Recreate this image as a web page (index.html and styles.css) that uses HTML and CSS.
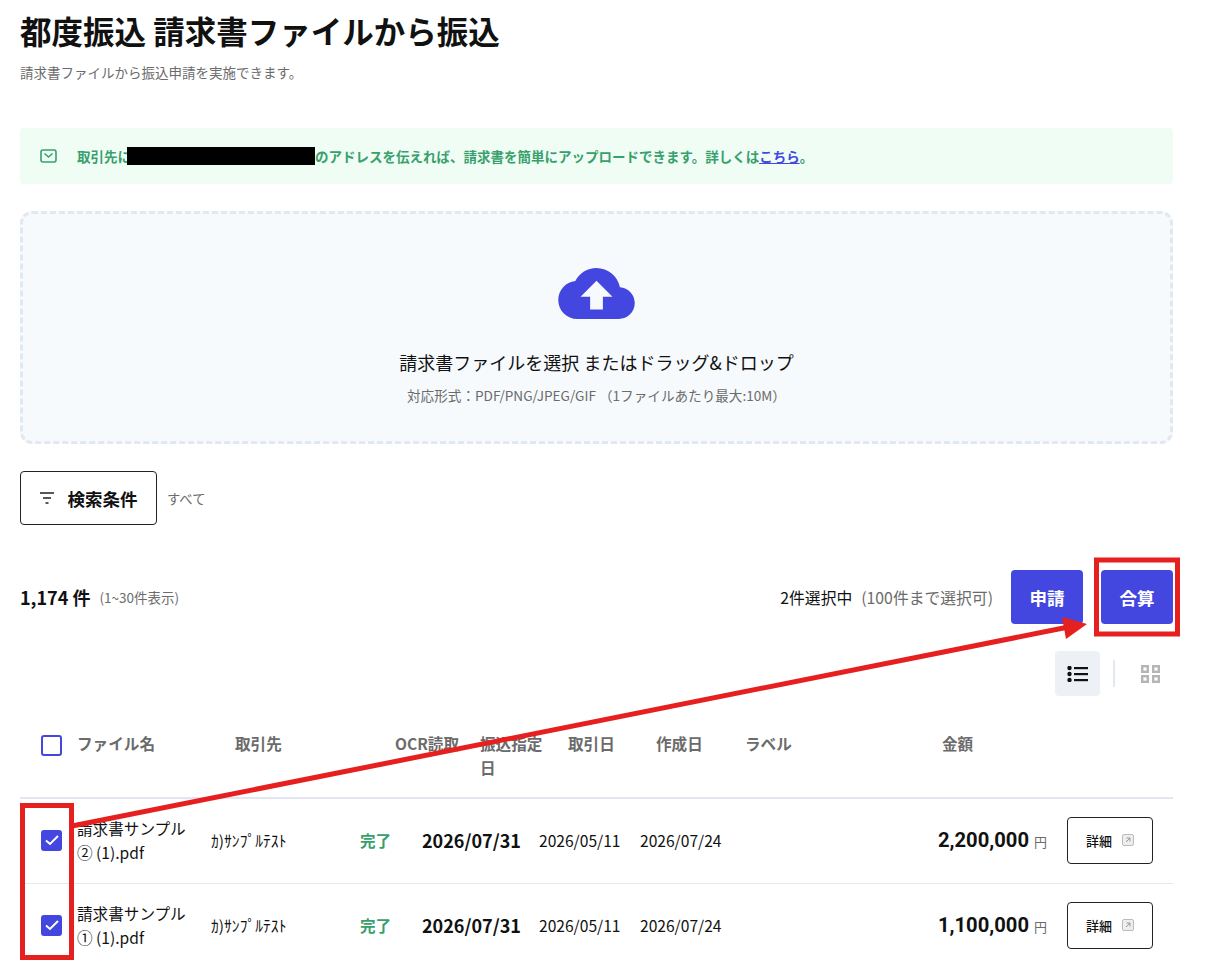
FILE: index.html
```html
<!DOCTYPE html>
<html lang="ja">
<head>
    <meta charset="UTF-8">
    <title>都度振込 請求書ファイルから振込</title>
    <link rel="stylesheet" href="styles.css">
</head>
<body>
    <main class="page">
        <h1 class="title">都度振込 請求書ファイルから振込</h1>
        <p class="subtitle">請求書ファイルから振込申請を実施できます。</p>

        <div class="notice">
            <svg class="notice-icon" viewBox="0 0 17 14" width="17" height="14"><rect x="1" y="1" width="15" height="12" rx="2" fill="none" stroke="#38a06c" stroke-width="1.6"/><path d="M4.5 4.5 L8.5 8 L12.5 4.5" fill="none" stroke="#38a06c" stroke-width="1.6"/></svg>
            <span>取引先に</span><span class="redacted"></span><span>のアドレスを伝えれば、請求書を簡単にアップロードできます。詳しくは<a class="notice-link" href="#">こちら</a>。</span>
        </div>

        <div class="dropzone">
            <svg class="cloud" viewBox="0 4 24 16" width="77" height="51"><path fill="#4347e0" d="M19.35 10.04C18.67 6.59 15.64 4 12 4 9.11 4 6.6 5.64 5.35 8.04 2.34 8.36 0 10.91 0 14c0 3.31 2.69 6 6 6h13c2.76 0 5-2.24 5-5 0-2.64-2.05-4.78-4.65-4.96zM14 13v4h-4v-4H7l5-5 5 5h-3z"/></svg>
            <div class="drop-title">請求書ファイルを選択 またはドラッグ&amp;ドロップ</div>
            <div class="drop-note">対応形式：PDF/PNG/JPEG/GIF （1ファイルあたり最大:10M）</div>
        </div>

        <div class="search-row">
            <button class="search-button">
                <svg viewBox="0 0 14 12" width="14" height="12"><path d="M0 1h14M3 6h8M5.5 11h3" stroke="#222" stroke-width="1.6" fill="none"/></svg>
                検索条件
            </button>
            <span class="search-state">すべて</span>
        </div>

        <div class="count-row">
            <div class="count"><strong>1,174 件</strong><span class="count-range">(1~30件表示)</span></div>
            <div class="selection">2件選択中<span class="selection-limit">(100件まで選択可)</span></div>
            <button class="primary-button">申請</button>
            <button class="primary-button">合算</button>
        </div>

        <div class="view-row">
            <span class="view-button">
                <svg viewBox="0 0 21 16" width="21" height="16"><g fill="#111"><circle cx="2.5" cy="2" r="2.2"/><circle cx="2.5" cy="8" r="2.2"/><circle cx="2.5" cy="14" r="2.2"/><rect x="7" y="1" width="14" height="2.2"/><rect x="7" y="7" width="14" height="2.2"/><rect x="7" y="13" width="14" height="2.2"/></g></svg>
            </span>
            <span class="view-divider"></span>
            <svg class="view-grid" viewBox="0 0 19 18" width="19" height="18"><g fill="none" stroke="#b5b5b5" stroke-width="2.4"><rect x="1.2" y="1.2" width="5.6" height="5.6"/><rect x="12.2" y="1.2" width="5.6" height="5.6"/><rect x="1.2" y="11.2" width="5.6" height="5.6"/><rect x="12.2" y="11.2" width="5.6" height="5.6"/></g></svg>
        </div>

        <div class="table-head">
            <span class="checkbox"></span>
            <span>ファイル名</span>
            <span>取引先</span>
            <span>OCR読取</span>
            <span>振込指定日</span>
            <span>取引日</span>
            <span>作成日</span>
            <span>ラベル</span>
            <span>金額</span>
        </div>

        <div class="table-row">
            <span class="checkbox checked"><svg viewBox="0 0 14 12" width="14" height="12"><path d="M1 6.5 L5 10 L13 2" fill="none" stroke="#fff" stroke-width="2"/></svg></span>
            <span class="file-name">請求書サンプル② (1).pdf</span>
            <span class="partner">ｶ)ｻﾝﾌﾟﾙﾃｽﾄ</span>
            <span class="status">完了</span>
            <span class="due-date">2026/07/31</span>
            <span class="date">2026/05/11</span>
            <span class="date">2026/07/24</span>
            <span class="amount"><strong>2,200,000</strong><small>円</small></span>
            <button class="detail-button">詳細<svg viewBox="0 0 12 12" width="12" height="12"><rect x="0.5" y="0.5" width="11" height="11" rx="1.5" fill="#eee" stroke="#bbb"/><path d="M4 8 L8 4 M4.5 4 H8 V7.5" fill="none" stroke="#999"/></svg></button>
        </div>
        <div class="table-row">
            <span class="checkbox checked"><svg viewBox="0 0 14 12" width="14" height="12"><path d="M1 6.5 L5 10 L13 2" fill="none" stroke="#fff" stroke-width="2"/></svg></span>
            <span class="file-name">請求書サンプル① (1).pdf</span>
            <span class="partner">ｶ)ｻﾝﾌﾟﾙﾃｽﾄ</span>
            <span class="status">完了</span>
            <span class="due-date">2026/07/31</span>
            <span class="date">2026/05/11</span>
            <span class="date">2026/07/24</span>
            <span class="amount"><strong>1,100,000</strong><small>円</small></span>
            <button class="detail-button">詳細<svg viewBox="0 0 12 12" width="12" height="12"><rect x="0.5" y="0.5" width="11" height="11" rx="1.5" fill="#eee" stroke="#bbb"/><path d="M4 8 L8 4 M4.5 4 H8 V7.5" fill="none" stroke="#999"/></svg></button>
        </div>
    </main>

    <!-- red annotations drawn on top of the screenshot -->
    <svg class="annotations" viewBox="0 0 1215 964" width="1215" height="964">
        <g fill="none" stroke="#e61f1f">
            <rect x="1096.5" y="560" width="81" height="74" stroke-width="5"/>
            <rect x="22.5" y="805.5" width="49" height="152" stroke-width="5"/>
            <path d="M72 826 L1066 627.5" stroke-width="5"/>
        </g>
        <path d="M1087 624 L1062 617 L1066 639 Z" fill="#e61f1f"/>
    </svg>
</body>
</html>
```

FILE: styles.css
```css
body {
    margin: 0;
    background-color: #fff;
    color: #111;
    font-family: "Noto Sans CJK JP", "Noto Sans", sans-serif;
    overflow: hidden;
    height: 964px;
}
button {
    font-family: inherit;
    cursor: pointer;
}
.page {
    width: 1153px;
    padding: 8px 0 0 20px;
}
.title {
    margin: 0;
    font-size: 31.5px;
    line-height: 44px;
    font-weight: 700;
}
.subtitle {
    margin: 10px 0 0;
    font-size: 13.5px;
    line-height: 20px;
    color: #6b6b6b;
}
.notice {
    display: flex;
    align-items: center;
    height: 56px;
    margin-top: 46px;
    padding-left: 20px;
    background-color: #effdf5;
    border-radius: 4px;
    color: #38a06c;
    font-size: 13.5px;
    font-weight: 700;
}
.notice-icon {
    margin-right: 20px;
}
.redacted {
    width: 188px;
    height: 18px;
    margin-left: -4px;
    background-color: #000;
}
.notice-link {
    color: #4347e0;
}
.dropzone {
    display: flex;
    flex-direction: column;
    align-items: center;
    box-sizing: border-box;
    height: 233px;
    margin-top: 27px;
    padding-top: 54px;
    background-color: #f7fafd;
    border: 3px dashed #e2e8f0;
    border-radius: 12px;
}
.drop-title {
    margin-top: 28px;
    font-size: 18px;
    line-height: 30px;
}
.drop-note {
    margin-top: 8px;
    font-size: 13.6px;
    line-height: 20px;
    color: #6b6b6b;
}
.search-row {
    display: flex;
    align-items: center;
    gap: 10px;
    margin-top: 27px;
}
.search-button {
    display: flex;
    align-items: center;
    justify-content: center;
    gap: 14px;
    width: 137px;
    height: 54px;
    padding: 0;
    background-color: #fff;
    border: 1px solid #222;
    border-radius: 4px;
    color: #111;
    font-size: 17.5px;
    font-weight: 700;
}
.search-state {
    font-size: 13.3px;
    color: #6b6b6b;
}
.count-row {
    display: flex;
    align-items: center;
    height: 54px;
    margin-top: 45px;
}
.count {
    flex: 1;
    display: flex;
    align-items: center;
    gap: 9px;
}
.count strong {
    font-size: 18px;
}
.count-range {
    font-size: 13.5px;
    color: #6b6b6b;
}
.selection {
    margin-right: 18px;
    font-size: 15.8px;
}
.selection-limit {
    margin-left: 9px;
    color: #6b6b6b;
}
.primary-button {
    width: 72px;
    height: 54px;
    margin-left: 18px;
    padding: 0;
    background-color: #4347e0;
    border: none;
    border-radius: 4px;
    color: #fff;
    font-size: 17.5px;
    font-weight: 700;
}
.selection + .primary-button {
    margin-left: 0;
}
.view-row {
    display: flex;
    align-items: center;
    justify-content: flex-end;
    height: 45px;
    margin-top: 27px;
    padding-right: 13px;
}
.view-button {
    display: flex;
    align-items: center;
    justify-content: center;
    width: 45px;
    height: 45px;
    background-color: #edf1f6;
    border-radius: 4px;
}
.view-divider {
    width: 2px;
    height: 27px;
    margin: 0 26px 0 13px;
    background-color: #e2e8f0;
}
.table-head {
    display: grid;
    grid-template-columns: 36px 158px 160px 85px 88px 88px 89px 197px 1fr;
    align-items: start;
    padding: 35px 0 18px 21px;
    border-bottom: 2px solid #e2e6f3;
    font-size: 15.6px;
    font-weight: 700;
    line-height: 24px;
    color: #6b6b6b;
}
.table-head span:nth-child(5) {
    width: 66px;
}
.table-head .checkbox {
    margin-top: 4px;
}
.checkbox {
    display: flex;
    align-items: center;
    justify-content: center;
    box-sizing: border-box;
    width: 21px;
    height: 21px;
    border: 2px solid #4347e0;
    border-radius: 3px;
}
.checked {
    background-color: #4347e0;
}
.table-row {
    display: grid;
    grid-template-columns: 36px 134px 149px 62px 117px 101px 100px 1fr 86px;
    align-items: center;
    box-sizing: border-box;
    height: 85px;
    padding: 0 20px 2px 21px;
    border-bottom: 1px solid #e6e8f0;
    font-size: 15.6px;
}
.file-name {
    width: 116px;
    line-height: 24px;
}
.status {
    color: #38a06c;
    font-weight: 700;
}
.due-date {
    font-size: 18px;
    font-weight: 700;
}
.amount {
    display: flex;
    align-items: baseline;
    justify-content: flex-end;
    gap: 5px;
    margin-right: 20px;
}
.amount strong {
    font-family: Roboto, sans-serif;
    font-size: 20.2px;
}
.amount small {
    font-size: 13px;
    color: #6b6b6b;
}
.detail-button {
    display: flex;
    align-items: center;
    justify-content: center;
    gap: 10px;
    width: 86px;
    height: 47px;
    padding: 0;
    background-color: #fff;
    border: 1px solid #222;
    border-radius: 4px;
    color: #111;
    font-size: 13px;
    font-weight: 500;
}
.annotations {
    position: absolute;
    top: 0;
    left: 0;
    pointer-events: none;
}
```
